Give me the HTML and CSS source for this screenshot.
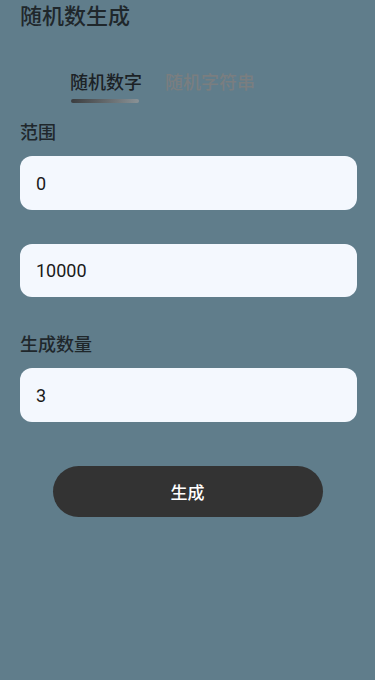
FILE: index.html
```html
<!DOCTYPE html>
<html lang="zh-CN">
<head>
<meta charset="utf-8">
<meta name="viewport" content="width=device-width, initial-scale=1">
<title>随机数生成</title>
<link rel="stylesheet" href="styles.css">
</head>
<body>
<div class="page">
  <h1 class="title">随机数生成</h1>
  <div class="tabs">
    <div class="tab active">
      <span class="tab-text">随机数字</span>
      <span class="indicator"></span>
    </div>
    <div class="tab">
      <span class="tab-text">随机字符串</span>
    </div>
  </div>
  <div class="label first">范围</div>
  <input class="field" type="text" value="0">
  <input class="field second" type="text" value="10000">
  <div class="label">生成数量</div>
  <input class="field" type="text" value="3">
  <div class="actions">
    <button class="btn" type="button">生成</button>
  </div>
</div>
</body>
</html>
```
FILE: styles.css
```css
html, body {
  margin: 0;
  padding: 0;
  background: #607d8b;
}
body {
  font-family: Roboto, "Noto Sans CJK SC", sans-serif;
  color: #1e2529;
  height: 680px;
}
.page {
  display: flex;
  flex-direction: column;
  padding: 1px 18px 0 20px;
}
.title {
  margin: 0;
  font-size: 22px;
  line-height: 32px;
  font-weight: 500;
  color: #1f272b;
}
.tabs {
  display: flex;
  gap: 23px;
  margin-top: 38px;
  padding-left: 50px;
}
.tab {
  display: flex;
  flex-direction: column;
}
.tab-text {
  font-size: 18px;
  line-height: 24px;
  font-weight: 500;
  color: #7a7e80;
}
.tab.active .tab-text {
  color: #1c2226;
}
.indicator {
  margin: 4px 0 0 1px;
  width: 68px;
  height: 4px;
  border-radius: 2px;
  background: linear-gradient(to right, #3b3d3f, #8a9296);
}
.label {
  margin-top: 36px;
  font-size: 18px;
  line-height: 24px;
  font-weight: 500;
  color: #1f272b;
}
.label.first {
  margin-top: 18px;
}
.field {
  display: block;
  box-sizing: border-box;
  width: 337px;
  height: 54px;
  margin-top: 11px;
  padding: 0 16px;
  border: none;
  border-radius: 12px;
  background: #f4f8fe;
  font-family: Roboto, "Noto Sans CJK SC", sans-serif;
  font-size: 18px;
  color: #1a1a1a;
  outline: none;
}
.field.second {
  margin-top: 34px;
  height: 53px;
}
.actions {
  display: flex;
  justify-content: center;
  margin-top: 44px;
}
.btn {
  width: 270px;
  height: 51px;
  margin-left: -2px;
  border: none;
  border-radius: 26px;
  background: #333333;
  color: #ffffff;
  font-family: Roboto, "Noto Sans CJK SC", sans-serif;
  font-size: 17px;
  font-weight: 500;
}
```
